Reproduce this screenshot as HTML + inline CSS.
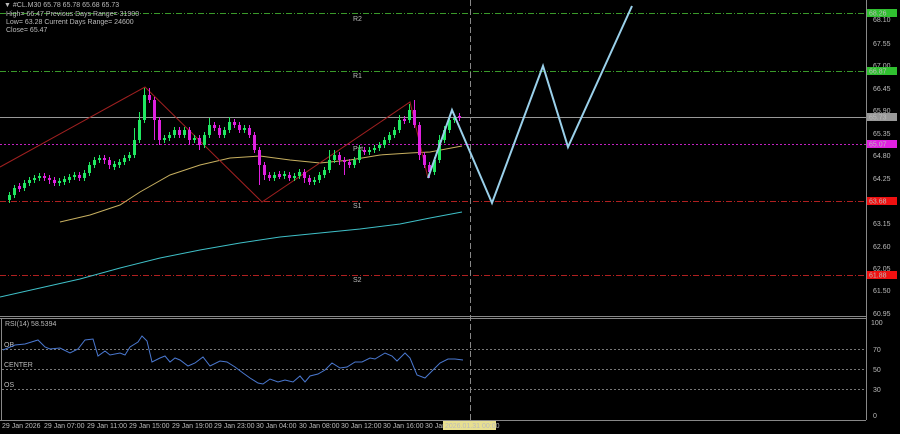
<!DOCTYPE html>
<html><head><meta charset="utf-8"><style>
html,body{margin:0;padding:0;background:#000;width:900px;height:434px;overflow:hidden}
svg{display:block}
text{font-family:"Liberation Sans",sans-serif;font-size:7px;fill:#bbb}
</style></head><body>
<svg width="900" height="434" viewBox="0 0 900 434" xmlns="http://www.w3.org/2000/svg">
<rect width="900" height="434" fill="#000"/>
<line x1="866.5" y1="0" x2="866.5" y2="420" stroke="#888"/>
<line x1="0" y1="316.5" x2="866" y2="316.5" stroke="#888"/>
<line x1="0" y1="318.5" x2="866" y2="318.5" stroke="#888"/>
<line x1="0" y1="420.5" x2="866" y2="420.5" stroke="#888"/>
<line x1="1.5" y1="318" x2="1.5" y2="420" stroke="#888"/>
<line x1="0" y1="13.5" x2="866" y2="13.5" stroke="#3a9a2a" stroke-dasharray="6,2,1,2"/>
<line x1="0" y1="71.5" x2="866" y2="71.5" stroke="#3a9a2a" stroke-dasharray="6,2,1,2"/>
<line x1="0" y1="117.5" x2="866" y2="117.5" stroke="#999"/>
<line x1="0" y1="144.5" x2="866" y2="144.5" stroke="#c020c0" stroke-dasharray="2,2"/>
<line x1="0" y1="201.5" x2="866" y2="201.5" stroke="#b02020" stroke-dasharray="6,2,1,2"/>
<line x1="0" y1="275.5" x2="866" y2="275.5" stroke="#b02020" stroke-dasharray="6,2,1,2"/>
<text x="353" y="21" fill="#ddd">R2</text>
<text x="353" y="78" fill="#ddd">R1</text>
<text x="353" y="151" fill="#ddd">Pvt</text>
<text x="353" y="208" fill="#ddd">S1</text>
<text x="353" y="282" fill="#ddd">S2</text>
<line x1="2" y1="349.5" x2="866" y2="349.5" stroke="#777" stroke-dasharray="2,2"/>
<line x1="2" y1="369.5" x2="866" y2="369.5" stroke="#777" stroke-dasharray="2,2"/>
<line x1="2" y1="389.5" x2="866" y2="389.5" stroke="#777" stroke-dasharray="2,2"/>
<text x="4" y="347">OB</text><text x="4" y="367">CENTER</text><text x="4" y="387">OS</text>
<text x="5" y="326">RSI(14) 58.5394</text>
<line x1="470.5" y1="0" x2="470.5" y2="420" stroke="#888" stroke-dasharray="6,3"/>
<polyline fill="none" stroke="#c8b060" points="60,222 90,215 120,205 140,192 170,175 200,165 230,158 260,156 290,160 320,163 350,160 380,155 410,153 430,152 462,146"/>
<polyline fill="none" stroke="#3fc0c8" points="0,297 40,288 80,279 120,268 160,258 200,250 240,243 280,237 320,233 360,229 400,224 430,218 462,212"/>
<polyline fill="none" stroke="#a02020" points="0,167 145,87 262,202 410,102 428,178"/>
<!-- green candles -->
<path stroke="#20e860" fill="none" d="M9.5,192V203M14.5,185V198M24.5,180V191M29.5,177V186M34.5,175V183M39.5,173V181M59.5,178V186M64.5,176V185M69.5,174V183M74.5,172V180M84.5,170V181M89.5,162V176M94.5,157V168M99.5,155V163M114.5,161V170M119.5,159V168M124.5,155V165M129.5,152V161M134.5,128V158M139.5,112V143M144.5,88V123M164.5,135V143M169.5,132V141M174.5,127V138M184.5,127V138M194.5,135V143M204.5,132V148M209.5,118V138M224.5,127V138M229.5,117V133M244.5,125V133M274.5,172V181M284.5,171V179M294.5,173V181M299.5,169V179M314.5,177V185M319.5,172V183M324.5,167V178M329.5,150V173M334.5,150V163M354.5,157V168M359.5,145V163M369.5,147V155M374.5,145V153M379.5,142V151M384.5,137V148M389.5,132V143M394.5,127V138M399.5,115V133M409.5,104V123M434.5,157V175M439.5,135V163M444.5,126V143M449.5,116V133M454.5,115V123"/>
<path fill="#20e860" d="M8,195h3v5h-3zM13,188h3v7h-3zM23,183h3v5h-3zM28,180h3v3h-3zM33,178h3v2h-3zM38,176h3v2h-3zM58,181h3v2h-3zM63,179h3v3h-3zM68,177h3v3h-3zM73,175h3v2h-3zM83,173h3v5h-3zM88,165h3v8h-3zM93,160h3v5h-3zM98,158h3v2h-3zM113,164h3v3h-3zM118,162h3v3h-3zM123,158h3v4h-3zM128,155h3v3h-3zM133,140h3v15h-3zM138,120h3v20h-3zM143,95h3v25h-3zM163,138h3v2h-3zM168,135h3v3h-3zM173,130h3v5h-3zM183,130h3v5h-3zM193,138h3v2h-3zM203,135h3v10h-3zM208,125h3v10h-3zM223,130h3v5h-3zM228,122h3v8h-3zM243,128h3v2h-3zM273,175h3v3h-3zM283,174h3v2h-3zM293,176h3v2h-3zM298,172h3v4h-3zM313,180h3v2h-3zM318,175h3v5h-3zM323,170h3v5h-3zM328,160h3v10h-3zM333,155h3v5h-3zM353,160h3v5h-3zM358,150h3v10h-3zM368,150h3v2h-3zM373,148h3v2h-3zM378,145h3v3h-3zM383,140h3v5h-3zM388,135h3v5h-3zM393,130h3v5h-3zM398,120h3v10h-3zM408,110h3v10h-3zM433,160h3v12h-3zM438,140h3v20h-3zM443,130h3v10h-3zM448,120h3v10h-3zM453,118h3v2h-3z"/>
<!-- magenta candles -->
<path stroke="#e020e0" fill="none" d="M19.5,183V192M44.5,173V181M49.5,175V184M54.5,177V186M79.5,172V181M104.5,155V164M109.5,157V169M149.5,88V103M154.5,97V140M159.5,117V145M179.5,127V138M189.5,127V145M199.5,135V150M214.5,122V131M219.5,125V138M234.5,119V128M239.5,122V133M249.5,125V138M254.5,132V153M259.5,147V185M264.5,162V180M269.5,172V181M279.5,171V179M289.5,172V181M304.5,169V183M309.5,175V185M339.5,152V165M344.5,157V175M349.5,159V168M364.5,147V155M404.5,116V124M414.5,100V128M419.5,122V160M424.5,152V168M429.5,162V178M459.5,113V121"/>
<path fill="#e020e0" d="M18,186h3v3h-3zM43,176h3v2h-3zM48,178h3v2h-3zM53,180h3v3h-3zM78,175h3v3h-3zM103,158h3v2h-3zM108,160h3v5h-3zM148,95h3v5h-3zM153,100h3v20h-3zM158,120h3v20h-3zM178,130h3v5h-3zM188,130h3v10h-3zM198,138h3v7h-3zM213,125h3v3h-3zM218,128h3v7h-3zM233,122h3v3h-3zM238,125h3v5h-3zM248,128h3v7h-3zM253,135h3v15h-3zM258,150h3v15h-3zM263,165h3v10h-3zM268,175h3v3h-3zM278,174h3v3h-3zM288,175h3v3h-3zM303,172h3v6h-3zM308,178h3v4h-3zM338,155h3v5h-3zM343,160h3v2h-3zM348,162h3v3h-3zM363,150h3v2h-3zM403,119h3v2h-3zM413,110h3v15h-3zM418,125h3v30h-3zM423,155h3v10h-3zM428,165h3v7h-3zM458,116h3v2h-3z"/>
<polyline fill="none" stroke="#9ad0ea" stroke-width="2" points="428,178 452,110 492,203 543,66 568,147 632,6"/>
<polyline fill="none" stroke="#4a78d0" points="3,350 15,345 25,344 38,340 45,347 50,349 60,348 70,353 78,349 85,340 93,339 98,356 105,351 110,355 120,353 125,355 130,347 138,342 142,336 147,341 152,362 160,358 165,356 170,362 175,358 180,360 188,366 195,363 203,357 210,366 220,361 227,362 235,367 243,373 250,378 258,383 263,384 270,379 278,382 285,380 293,382 300,376 305,382 310,376 318,374 325,370 332,363 340,368 347,367 355,362 362,362 370,358 375,359 385,353 392,356 397,361 405,353 410,358 417,375 425,378 433,370 440,363 448,359 455,359 463,360"/>
<text x="4" y="7" fill="#ccc">▼ #CL.M30  65.78 65.78 65.68 65.73</text>
<text x="6" y="16">High= 66.47    Previous Days Range= 31900</text>
<text x="6" y="24">Low= 63.28    Current Days Range= 24600</text>
<text x="6" y="32">Close= 65.47</text>
<g fill="#aaa">
<text x="873" y="22">68.10</text><text x="873" y="46">67.55</text><text x="873" y="68">67.00</text><text x="873" y="91">66.45</text><text x="873" y="113">65.90</text><text x="873" y="136">65.35</text><text x="873" y="158">64.80</text><text x="873" y="181">64.25</text><text x="873" y="226">63.15</text><text x="873" y="249">62.60</text><text x="873" y="271">62.05</text><text x="873" y="293">61.50</text><text x="873" y="316">60.95</text>
<text x="871" y="325">100</text><text x="873" y="352">70</text><text x="873" y="372">50</text><text x="873" y="392">30</text><text x="873" y="418">0</text>
</g>
<rect x="867" y="9" width="30" height="8" fill="#30c030"/><text x="869" y="15.5" fill="#063">68.26</text>
<rect x="867" y="67" width="30" height="8" fill="#30c030"/><text x="869" y="73.5" fill="#063">66.87</text>
<rect x="867" y="113" width="30" height="8" fill="#999"/><text x="869" y="119.5" fill="#222">65.73</text>
<rect x="867" y="140" width="30" height="8" fill="#e020e0"/><text x="869" y="146.5" fill="#a0a">65.07</text>
<rect x="867" y="197" width="30" height="8" fill="#f01010"/><text x="869" y="203.5" fill="#900">63.68</text>
<rect x="867" y="271" width="30" height="8" fill="#f01010"/><text x="869" y="277.5" fill="#900">61.88</text>
<g fill="#aaa">
<text x="2" y="428">29 Jan 2026</text><text x="44" y="428">29 Jan 07:00</text><text x="87" y="428">29 Jan 11:00</text><text x="129" y="428">29 Jan 15:00</text><text x="172" y="428">29 Jan 19:00</text><text x="214" y="428">29 Jan 23:00</text><text x="256" y="428">30 Jan 04:00</text><text x="299" y="428">30 Jan 08:00</text><text x="341" y="428">30 Jan 12:00</text><text x="383" y="428">30 Jan 16:00</text><text x="425" y="428">30 Jan</text>
</g>
<rect x="443" y="421" width="53" height="9" fill="#e8e090"/><text x="445" y="428" fill="#333">2026.01.31 00:00</text>
</svg>
</body></html>
